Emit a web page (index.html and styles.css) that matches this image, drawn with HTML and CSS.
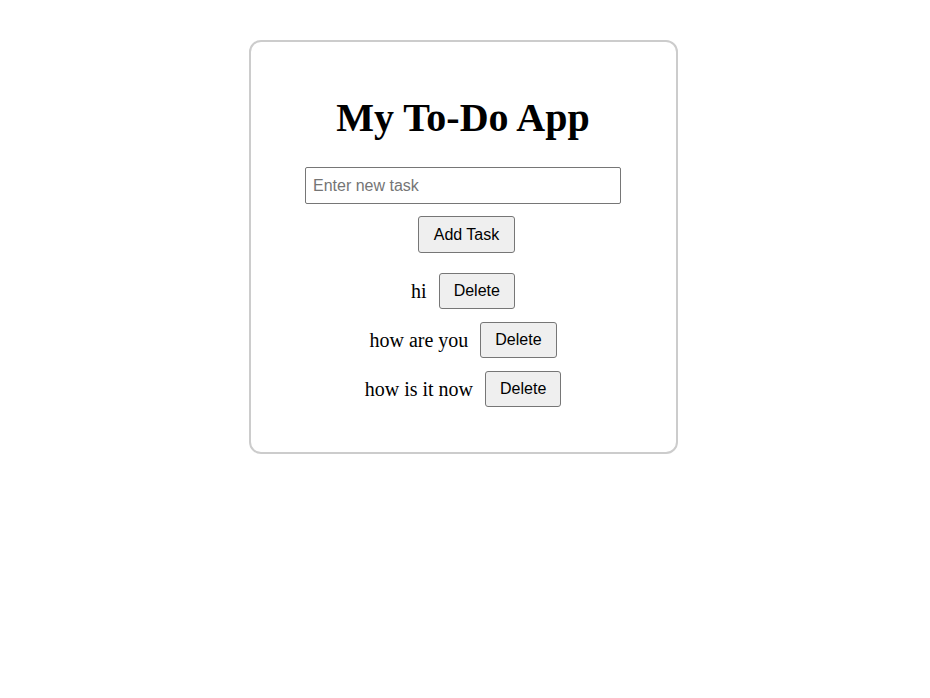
FILE: index.html
```html
<!DOCTYPE html>
<html>
<head>
<meta charset="utf-8">
<link rel="stylesheet" href="styles.css">
</head>
<body>
<div class="card">
  <h1 class="title">My To-Do App</h1>
  <input class="task-input" type="text" placeholder="Enter new task">
  <button class="btn add-btn">Add Task</button>
  <ul class="task-list">
    <li class="task"><span class="task-text">hi</span><button class="btn del-btn">Delete</button></li>
    <li class="task"><span class="task-text">how are you</span><button class="btn del-btn">Delete</button></li>
    <li class="task"><span class="task-text">how is it now</span><button class="btn del-btn">Delete</button></li>
  </ul>
</div>
</body>
</html>
```
FILE: styles.css
```css
html, body {
  margin: 0;
  padding: 0;
  background: #fff;
}
body {
  font-family: "Liberation Serif", "Times New Roman", serif;
  color: #000;
  padding-right: 4px;
}
.card {
  box-sizing: border-box;
  width: 429px;
  margin: 40px auto 0;
  border: 2px solid #ccc;
  border-radius: 12px;
  padding: 53px 20px 45px;
  display: flex;
  flex-direction: column;
  align-items: center;
}
.title {
  margin: 0 0 26px;
  font-size: 40px;
  line-height: 46px;
  font-weight: bold;
}
.task-input {
  box-sizing: border-box;
  width: 316px;
  height: 37px;
  margin: 0 0 12px;
  padding: 0 7px;
  border: 1px solid #767676;
  border-radius: 2px;
  font-family: "Liberation Sans", Arial, sans-serif;
  font-size: 16px;
}
.task-input::placeholder {
  color: #757575;
}
.btn {
  box-sizing: border-box;
  background: #efefef;
  border: 1px solid #767676;
  border-radius: 3px;
  font-family: "Liberation Sans", Arial, sans-serif;
  font-size: 16px;
  color: #000;
  padding: 0 14px;
}
.add-btn {
  height: 37px;
  width: 97px;
  margin-left: 7px;
}
.task-list {
  list-style: none;
  margin: 20px 0 0;
  padding: 0;
  display: flex;
  flex-direction: column;
  align-items: center;
  gap: 13px;
}
.task {
  display: flex;
  align-items: center;
  gap: 12px;
  font-size: 20px;
}
.del-btn {
  height: 36px;
}
```
